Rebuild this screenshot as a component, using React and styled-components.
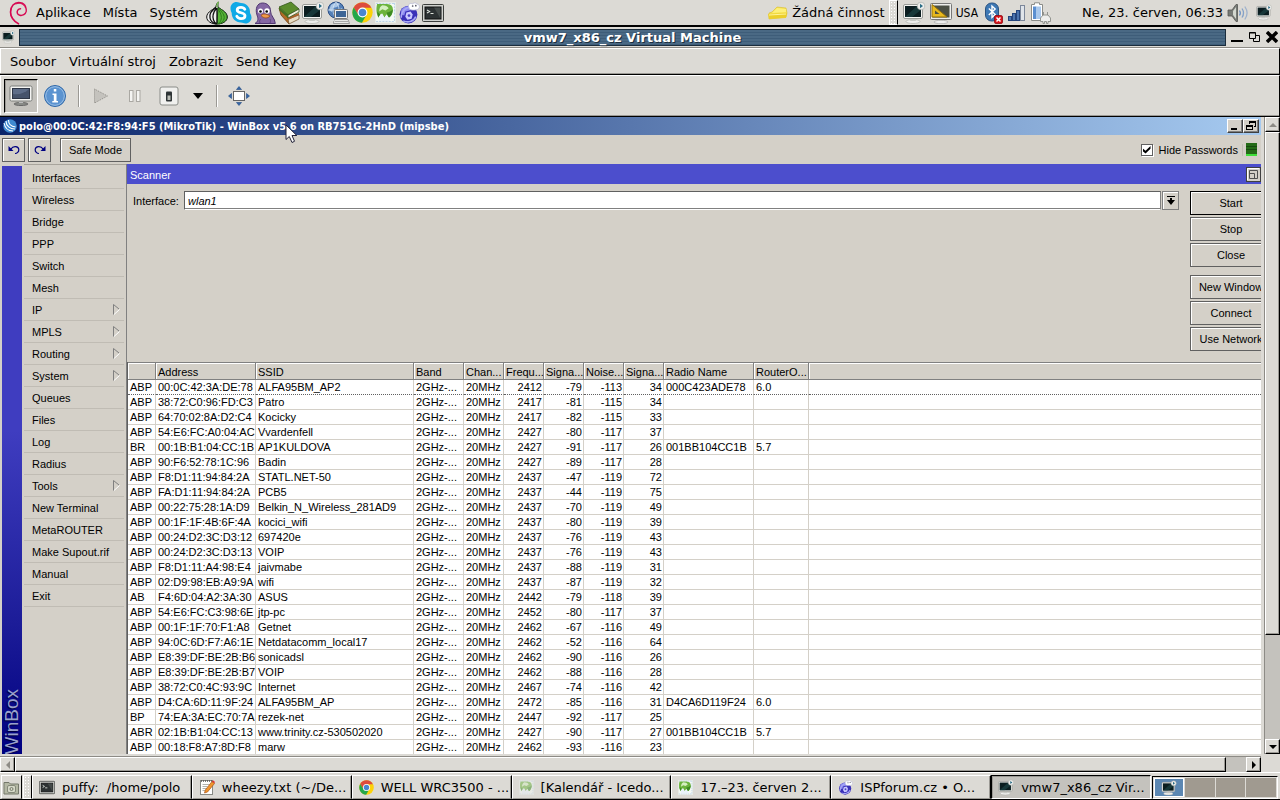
import styled, { createGlobalStyle } from "styled-components";

const GlobalStyle = createGlobalStyle`
  * {
    box-sizing: border-box;
  }
  body {
    margin: 0;
    background: #dcdad5;
    font-family: "DejaVu Sans", sans-serif;
    font-size: 13px;
    color: #000;
    overflow: hidden;
  }
  button,
  input {
    font: inherit;
    color: inherit;
    margin: 0;
    padding: 0;
  }
  button {
    background: none;
    border: none;
    white-space: pre;
  }
  svg {
    display: block;
    flex: none;
  }
`;

const Desktop = styled.div`
  height: 100vh;
  display: flex;
  flex-direction: column;
  position: relative;
`;

/* ---------- top panel ---------- */

const Panel = styled.header`
  height: 27px;
  flex: none;
  display: flex;
  align-items: center;
  padding: 0 8px 0 8px;
  border-bottom: 2px solid #000;
  border-image: linear-gradient(#8d8b86 50%, #000 50%) 2;
`;

const PanelMenu = styled.nav`
  display: flex;
  align-items: center;
  gap: 12px;
  margin: 0 8px 0 6px;
`;

const PanelButton = styled.button`
  line-height: 18px;
`;

const Launchers = styled.div`
  display: flex;
  align-items: center;
  gap: 2px;
`;

const Tray = styled.div`
  display: flex;
  align-items: center;
  gap: ${(props) => props.$gap || 4}px;
  margin-left: ${(props) => (props.$push ? "auto" : "0")};
`;

const Layout = styled.span`
  font-family: "DejaVu Sans Condensed", "DejaVu Sans", sans-serif;
  font-size: 12px;
  margin-right: 2px;
`;

const Clock = styled.time`
  margin: 0 4px 0 30px;
  white-space: nowrap;
`;

const Handle = styled.div`
  width: 9px;
  height: ${(props) => props.$height}px;
  flex: none;
  border: 1px solid #fff;
  border-right-color: #000;
  background-color: #dcdad5;
  background-image: radial-gradient(#fff 1px, transparent 1px);
  background-size: 3px 3px;
`;

/* ---------- host window ---------- */

const HostTitle = styled.div`
  height: 21px;
  flex: none;
  display: flex;
  align-items: center;
  padding: 0 2px 0 2px;
  border-bottom: 1px solid #8d8b86;
`;

const HostCaption = styled.h1`
  flex: 1;
  margin: 0 5px 0 4px;
  padding-left: 20px;
  height: 17px;
  line-height: 15px;
  font-size: 13px;
  text-align: center;
  color: #fff;
  text-shadow: 1px 1px 0 #1d2f40;
  border: 1px solid #1b2d3d;
  background: repeating-linear-gradient(#4a6984 0 2px, #3e5d79 2px 3px);
`;

const WindowControls = styled.div`
  display: flex;
  gap: 6px;
`;

const MenuBar = styled.nav`
  height: 27px;
  flex: none;
  display: flex;
  align-items: center;
  gap: 13px;
  padding: 0 10px;
  border-top: 1px solid #fff;
  border-right: 1px solid #000;
  border-bottom: 1px solid #000;
  box-shadow: inset 0 -1px 0 #9b9994, inset 1px 0 0 #fff;
`;

const ToolBar = styled.div`
  height: 42px;
  flex: none;
  display: flex;
  align-items: center;
  padding-left: 4px;
  border-top: 1px solid #fff;
  border-right: 1px solid #000;
  border-bottom: 1px solid #000;
  box-shadow: inset 0 -1px 0 #9b9994, inset 1px 0 0 #fff;
`;

const ToolButton = styled.button`
  width: ${(props) => props.$width || 34}px;
  height: 34px;
  display: flex;
  align-items: center;
  justify-content: center;
  ${(props) =>
    props.$pressed &&
    `
    background: #c4c2bd;
    border: 1px solid;
    border-color: #000 #fff #fff #000;
    box-shadow: inset 1px 1px 0 #9b9994;
  `}
`;

const ToolSeparator = styled.div`
  width: 2px;
  height: 22px;
  margin: 0 ${(props) => props.$right || 4}px 0 6px;
  background: #9b9994;
  border-right: 1px solid #fff;
`;

const Viewer = styled.main`
  flex: 1;
  min-height: 0;
  display: grid;
  grid-template-columns: 1fr 16px;
  grid-template-rows: 1fr 16px;
  column-gap: 3px;
  row-gap: 2px;
`;

/* ---------- scroll bars ---------- */

const ScrollBar = styled.div`
  display: flex;
  flex-direction: ${(props) => (props.$vertical ? "column" : "row")};
  background: #c4c2bd;
  border: 0 solid #8d8b86;
  border-width: ${(props) => (props.$vertical ? "0 0 0 1px" : "1px 0 0 0")};
`;

const ScrollArrow = styled.button`
  width: 15px;
  height: 15px;
  flex: none;
  display: flex;
  align-items: center;
  justify-content: center;
  background: #dcdad5;
  border: 1px solid;
  border-color: #fff #000 #000 #fff;
  box-shadow: inset -1px -1px 0 #9b9994;
`;

const ScrollThumb = styled.div`
  flex: ${(props) => props.$size};
  background: #dcdad5;
  border: 1px solid;
  border-color: #fff #000 #000 #fff;
  box-shadow: inset -1px -1px 0 #9b9994;
`;

const ScrollTrough = styled.div`
  flex: ${(props) => props.$size};
`;

/* ---------- winbox ---------- */

const Guest = styled.section`
  min-width: 0;
  min-height: 0;
  overflow: hidden;
  display: flex;
  flex-direction: column;
  background: #d4d0c8;
  font-family: "Liberation Sans", Arial, sans-serif;
  font-size: 11px;
`;

const WinTitle = styled.div`
  height: 18px;
  flex: none;
  display: flex;
  align-items: center;
  gap: 2px;
  padding: 0 2px 0 3px;
  background: linear-gradient(90deg, #0a246a, #a6caf0);
`;

const WinCaption = styled.h2`
  flex: 1;
  margin: 0;
  font-family: "DejaVu Sans Condensed", "DejaVu Sans", sans-serif;
  font-size: 11px;
  color: #fff;
`;

const CaptionButton = styled.button`
  width: 16px;
  height: 14px;
  margin-left: ${(props) => (props.$joined ? "-2px" : "0")};
  display: flex;
  align-items: center;
  justify-content: center;
  background: #d4d0c8;
  border: 1px solid;
  border-color: #fff #404040 #404040 #fff;
  box-shadow: inset -1px -1px 0 #808080;
`;

const WinTools = styled.div`
  height: 29px;
  flex: none;
  display: flex;
  align-items: center;
  gap: 3px;
  padding: 0 4px 0 2px;
`;

const WinButton = styled.button`
  width: ${(props) => props.$width}px;
  height: 24px;
  flex: none;
  display: flex;
  align-items: center;
  justify-content: center;
  margin-right: ${(props) => props.$after || 0}px;
  background: #d4d0c8;
  border: 1px solid ${(props) => (props.$focused ? "#000" : "#606060")};
  box-shadow: inset 1px 1px 0 #fff;
`;

const HidePasswords = styled.label`
  margin-left: auto;
  display: flex;
  align-items: center;
  gap: 6px;
  padding-right: 4px;
  border-right: 1px solid #c0bcb4;
`;

const Tick = styled.input`
  appearance: none;
  width: 12px;
  height: 12px;
  background: #fff;
  border: 1px solid #606060;
  box-shadow: 1px 1px 0 #fff;
  display: flex;
  align-items: center;
  justify-content: center;

  &:checked::before {
    content: "";
    width: 8px;
    height: 8px;
    background: #000;
    clip-path: polygon(0 35%, 38% 65%, 100% 5%, 100% 40%, 38% 100%, 0 70%);
  }
`;

const WinBody = styled.div`
  flex: 1;
  min-height: 0;
  display: flex;
`;

const Brand = styled.div`
  width: 20px;
  flex: none;
  margin: 2px 2px 0 2px;
  background: linear-gradient(#3f3dc0 0 45%, #1c1c98 78%, #000080);
  display: flex;
  align-items: flex-end;
  justify-content: center;
  overflow: hidden;

  span {
    writing-mode: vertical-rl;
    transform: rotate(180deg);
    font-size: 19px;
    line-height: 20px;
    color: #9aa1cc;
    text-shadow: -1px -1px 1px #00003c;
  }
`;

const SideMenu = styled.nav`
  width: 102px;
  flex: none;
  padding: 2px 2px 0 0;
  border-top: 1px solid #a8a49c;
`;

const SideItem = styled.button`
  width: 100%;
  height: 22px;
  display: flex;
  align-items: center;
  justify-content: space-between;
  padding: 0 4px 0 8px;
  border-bottom: 1px solid #c0bcb4;
`;

const Scanner = styled.section`
  flex: 1;
  min-width: 0;
  display: flex;
  flex-direction: column;
  border-left: 1px solid #808080;
`;

const ScannerTitle = styled.div`
  height: 20px;
  flex: none;
  display: flex;
  align-items: center;
  justify-content: space-between;
  padding-left: 3px;
  color: #fff;
  background: #4c4ecd;

  h3 {
    margin: 0;
    padding-top: 2px;
    font-size: 11px;
    font-weight: normal;
  }
`;

const ScannerForm = styled.div`
  flex: none;
  display: flex;
  align-items: flex-start;
  gap: 11px;
  padding: 7px 0 11px 6px;
`;

const Field = styled.div`
  flex: 1;
  display: flex;
  align-items: center;
  gap: 1px;

  label {
    width: 50px;
  }
`;

const FieldInput = styled.input`
  flex: 1;
  min-width: 0;
  height: 19px;
  padding: 0 3px;
  border: 1px solid;
  border-color: #606060 #808080 #fff #606060;
  box-shadow: inset 0 -1px 0 #808080;
  background: #fff;
  font-style: italic;
`;

const DropButton = styled.button`
  width: 17px;
  height: 19px;
  display: flex;
  align-items: center;
  justify-content: center;
  border: 1px solid #808080;
  box-shadow: inset 1px 1px 0 #fff;
`;

const Actions = styled.div`
  width: 71px;
  overflow: hidden;
  display: flex;
  flex-direction: column;
  gap: 8px;

  > div {
    display: flex;
    flex-direction: column;
    gap: 2px;
  }
`;

const TableBox = styled.div`
  flex: 1;
  min-height: 0;
  overflow: hidden;
  background: #fff;
  border-left: 1px solid #606060;
`;

const Table = styled.table`
  width: 100%;
  table-layout: fixed;
  border-collapse: separate;
  border-spacing: 0;
  white-space: nowrap;
`;

const Th = styled.th`
  height: 18px;
  padding: 1px 0 0 2px;
  text-align: left;
  font-weight: normal;
  line-height: 14px;
  overflow: hidden;
  background: #d4d0c8;
  border: solid #808080;
  border-width: 1px 1px 1px 0;
  box-shadow: inset 1px 1px 0 #fff;

  &:last-child {
    border-right: none;
  }
`;

const Td = styled.td`
  height: 15px;
  padding: 0 1px 0 2px;
  line-height: 14px;
  overflow: hidden;
  text-align: ${(props) => (props.$number ? "right" : "left")};
  border-right: 1px solid #d4d0c8;
  border-bottom: 1px ${(props) => (props.$current ? "dotted #606060" : "solid #d4d0c8")};

  &:last-child {
    border-right: none;
  }
`;

/* ---------- bottom panel ---------- */

const TaskBar = styled.footer`
  height: 28px;
  flex: none;
  display: flex;
  align-items: flex-end;
  padding: 0 2px 0 1px;
  border-top: 1px solid #fff;
  border-bottom: 1px solid #000;
`;

const DesktopButton = styled.button`
  width: 21px;
  height: 24px;
  display: flex;
  align-items: center;
  justify-content: center;
  margin-right: 1px;
  border: 1px solid;
  border-color: #fff #000 #9b9994 #fff;
`;

const Tasks = styled.div`
  flex: 1;
  min-width: 0;
  display: flex;
  margin-right: 1px;
`;

const Task = styled.button`
  flex: 1;
  min-width: 0;
  height: 24px;
  display: flex;
  align-items: center;
  gap: 7px;
  padding-left: 6px;
  overflow: hidden;
  border: 1px solid;
  border-color: ${(props) =>
    props.$active ? "#000 #fff #fff #000" : "#fff #000 #9b9994 #fff"};
  background: ${(props) => (props.$active ? "#c4c2bd" : "#dcdad5")};
  box-shadow: ${(props) =>
    props.$active ? "inset 1px 1px 0 #9b9994" : "inset -1px 0 0 #9b9994"};

  svg {
    opacity: ${(props) => (props.$minimized ? 0.5 : 1)};
  }
`;

const Pager = styled.div`
  width: 126px;
  height: 23px;
  flex: none;
  display: flex;
  gap: 1px;
  padding: 1px;
  background: #dcdad5;
  border: 1px solid;
  border-color: #000 #fff #fff #000;
`;

const Workspace = styled.button`
  flex: 1;
  display: flex;
  align-items: center;
  justify-content: center;
  background: ${(props) => (props.$active ? "#5c87b2" : "#a09a90")};
  border: 1px solid ${(props) => (props.$active ? "#fff" : "#a09a90")};
`;

const Pointer = styled.div`
  position: absolute;
  left: 285px;
  top: 124px;
`;

/* ---------- icons ---------- */

const DebianIcon = () => (
  <svg width="22" height="24" viewBox="0 0 22 24" fill="none" stroke="#d70751" strokeLinecap="round">
    <path strokeWidth="1.6" d="M17.500 6C16.500 1.500 9 0 5 4 1.500 8 2 14 4.500 17.500 6.200 20 7.800 21.500 10.500 22.800" />
    <path strokeWidth="1.500" d="M17.500 6c1.500 3 .8 6.300-1.700 7.700-2.600 1.400-5.800.7-6.500-1.600-.6-2.300.8-4.300 3.200-4.400" />
    <path strokeWidth=".8" d="M3.500 7C2 10 2.500 14 4 16.500M8 3C11 1.500 14.500 2.500 16.500 5" />
  </svg>
);

const TorIcon = () => (
  <svg width="22" height="24" viewBox="0 0 22 24">
    <path fill="#eee" stroke="#111" d="M12.500 1c-.8 2-.6 3.500-.5 5 1.500 2 9.300 4.500 9.300 10 0 4.500-5 7-10.300 7S.7 20.500.7 16C.7 10.500 8.500 8 10 6c0-2 1-4 2.500-5z" />
    <path fill="#56b436" stroke="#184d10" strokeWidth=".8" d="M12 6c1.500 2 9 4.500 9 10 0 4.300-4.500 6.800-10 6.800z" />
    <path fill="none" stroke="#111" strokeWidth="1.300" d="M10 6c-4 4-7 6-6 11 .5 3 3 5 6 6M10.500 7c-3 4-4.500 8-3 12 .6 2 2 3.500 3.500 4M11 7v16" />
    <path fill="none" stroke="#2f7a1c" strokeWidth="1" d="M12 7c4 4 7 7 6 11-.5 2-2.500 4-5 5M12 8c3 4 4 8 3 11-.5 2-2 3.500-4 4" />
    <path fill="none" stroke="#7bc35a" strokeWidth="1.500" d="M11 6c-.4-2 .2-3.500 1.500-5" />
  </svg>
);

const SkypeIcon = () => (
  <svg width="22" height="24" viewBox="0 0 22 24">
    <path fill="#10a9e6" d="M6.500 1C9 1 9 2 11 2c5.500 0 9.500 4.500 9 10 1 1.500 1.500 3 1.500 4.500 0 3.300-2.700 6-6 6-2 0-2.500-1-4.500-1-5.500 0-9.500-4.500-9.300-9.500C1 10.500.5 9 .5 7c0-3.300 2.700-6 6-6z" />
    <path fill="none" stroke="#fff" strokeWidth="2.800" strokeLinecap="round" d="M14.800 8.300C14 6.800 12.700 6.300 11 6.300c-2.300 0-3.800 1-3.800 2.600 0 3.800 7.800 1.900 7.800 5.800 0 1.800-1.800 2.900-4 2.900-2 0-3.500-.7-4.200-2.300" />
  </svg>
);

const PidginIcon = () => (
  <svg width="22" height="24" viewBox="0 0 22 24">
    <path fill="#8467a3" stroke="#4f3670" d="M1 22.500C5 20 4 17 3 14 1 8 3 2 8.500 2c5 0 8 3.500 8 8 0 5 4.500 7 4.800 12.500z" />
    <circle cx="6.500" cy="10" r="2.500" fill="#fff" />
    <circle cx="13" cy="10" r="2.700" fill="#fff" />
    <circle cx="6.500" cy="10.500" r="1.300" />
    <circle cx="12.700" cy="10.500" r="1.300" />
    <path fill="#f09a4a" stroke="#9b4b1c" strokeWidth=".8" d="M7 14.500c2-2 5-2 9 .5-2 2.500-6 3-9-.5z" />
    <path fill="none" stroke="#5f457f" d="M6 22c-1-2 0-3 1-4M16 22c1-2 .5-3 0-4" />
  </svg>
);

const BooksIcon = () => (
  <svg width="22" height="24" viewBox="0 0 22 24">
    <path fill="#b26b25" stroke="#6f3d10" strokeWidth=".8" d="M1 7l9 9 1 7L3 14z" />
    <path fill="#e7dcc4" stroke="#7a5a35" strokeWidth=".8" d="M10 18l11-4v4l-10 5z" />
    <path fill="#a9602a" d="M10 16l11-4v2l-11 5z" />
    <path fill="#5b8c2c" stroke="#33561a" strokeWidth=".8" d="M1 6l12-5 8 7-11 6z" />
    <path fill="#f3f0df" stroke="#33561a" strokeWidth=".8" d="M10 14l11-6v3l-11 6z" />
    <path fill="#476f22" d="M1 6l9 8v3L1 9z" />
  </svg>
);

const VmIcon = ({ width = 22, height = 24 }) => (
  <svg width={width} height={height} viewBox="0 0 22 24">
    <ellipse cx="10" cy="20.500" rx="7" ry="2" fill="#eeeeec" stroke="#a5a7a3" strokeWidth=".6" />
    <path fill="#c6c8c4" d="M8 17h4l1 3H7z" />
    <rect x=".5" y="3.500" width="19" height="14" rx="1.500" fill="#f4f4f2" stroke="#9a9c98" />
    <rect x="2" y="5" width="16" height="11" fill="#0b1d20" />
    <path fill="#245251" d="M2 16L14 5h4v4l-9 7z" opacity=".5" />
    <circle cx="18" cy="5" r="3.800" fill="#eeeeec" stroke="#a5a7a3" strokeWidth=".6" />
    <path fill="#2b6c85" d="M17 2.800l3 2.200-3 2.200z" />
  </svg>
);

const NetworkIcon = () => (
  <svg width="24" height="24" viewBox="0 0 24 24">
    <circle cx="10" cy="9" r="8" fill="#5480b8" stroke="#2c4f86" />
    <path fill="#a9c6e6" d="M5 4c2-2 7-3 9-1l-3 3-4 1-1 4-3-2zM12 9l4-2 1 3-3 3z" />
    <path fill="none" stroke="#dce9f6" strokeWidth=".7" d="M2 9h16M10 1c-4 4-4 12 0 16M10 1c4 4 4 12 0 16" />
    <rect x="8.500" y="8.500" width="13" height="9" rx="1" fill="#eee" stroke="#777" />
    <rect x="10" y="10" width="10" height="6" fill="#3d6596" />
    <path fill="#e8e8e6" stroke="#888" strokeWidth=".8" d="M8 18.500h14l1.500 4h-16z" />
    <path stroke="#999" strokeWidth=".8" d="M9 20.500h13" />
    <path fill="none" stroke="#ddd" strokeWidth="2" d="M3 19h5" />
  </svg>
);

const ChromeIcon = ({ size = 21 }) => (
  <svg width={size} height={size} viewBox="0 0 20 20">
    <circle cx="10" cy="10" r="9.700" fill="#fcd209" />
    <path fill="#dd4b3e" d="M1.600 5.200A9.700 9.700 0 0 1 18.500 5.500H10a4.500 4.500 0 0 0-4.200 3z" />
    <path fill="#dd4b3e" d="M1.600 5.200L6 12.300 10 5.500z" />
    <path fill="#25a74b" d="M1.600 5.200A9.700 9.700 0 0 0 9.500 19.700l4-7.200L6.200 12.500z" />
    <circle cx="10" cy="10" r="4.700" fill="#fff" />
    <circle cx="10" cy="10" r="3.600" fill="#4a86d0" />
  </svg>
);

const MailIcon = ({ size = 21 }) => (
  <svg width={size} height={size} viewBox="0 0 20 20">
    <rect x=".5" y=".5" width="19" height="19" fill="#f5faf5" stroke="#e8ece6" />
    <path stroke="#bcd2e8" strokeDasharray="2 1" d="M1 1.500h18M1 18.500h18M18.500 1v18" />
    <path fill="#6bb33c" d="M2 2h8c4 0 7 1 7 5 0 3-1 7-4 8l-2-3-2 3-3-4-3 3c-2-3-2-8-1-12z" />
    <path fill="#d5efc0" d="M7 3c3 0 5 1 6 3l-3 2-3-1-3 2c0-3 1-5 3-6z" />
    <path fill="#3d8a23" d="M11 10c3 0 4-1 6-3 0 4-2 7-4 8zM2 9l3 3-2 3z" />
    <path fill="#e9f2fa" d="M4 14l3-3 2 4 2-3 3 4v2H4z" />
  </svg>
);

const IceIcon = ({ size = 22 }) => (
  <svg width={size} height={size} viewBox="0 0 21 21">
    <circle cx="10" cy="12" r="8.500" fill="#3a31b8" />
    <path fill="#8d8cf0" d="M3 8c2-4 7-5 11-3l-3 3-4 1-1 4-3-1z" />
    <path fill="none" stroke="#a9a9f6" strokeWidth="1.500" d="M3 15c0-6 4-10 9-10M5 18c4 2 10 1 12-4" />
    <path fill="#c9c9ff" d="M8 10l4-1 2 3-1 4-4 1-2-3z" />
    <circle cx="10.500" cy="13" r="1.300" fill="#4a41c4" />
    <path fill="#fff" stroke="#b9bbd8" strokeWidth=".7" d="M10 4c0-3 3-3 4-2 1-2 4-1 4 0 3 0 3 4 1 5-2 1-7 1-8 0z" />
    <circle cx="14" cy="3.800" r=".8" fill="#556" />
    <circle cx="17" cy="3.500" r=".8" fill="#556" />
  </svg>
);

const TerminalIcon = ({ width = 22, height = 20 }) => (
  <svg width={width} height={height} viewBox="0 0 22 20">
    <rect x=".5" y="1.500" width="21" height="17" rx="1" fill="#d0d2ce" stroke="#3c3e3b" />
    <rect x="3" y="4" width="16" height="12" fill="#2d3233" stroke="#111" />
    <path fill="none" stroke="#dfe3dc" strokeWidth="1.200" d="M5 7l2.500 1.500L5 10M8.500 10.500h3" />
    <path fill="#555b5a" opacity=".6" d="M12 4.500h6.500v11z" />
  </svg>
);

const NoteIcon = () => (
  <svg width="20" height="16" viewBox="0 0 20 16">
    <path fill="#f6e04e" stroke="#d9bd2b" strokeWidth=".6" d="M1 8l3-1 5-5 9 1 1 5-1 4-17 2z" />
    <path fill="#fdf07a" d="M4 8l5-5 9 1v3z" />
    <path fill="#eccf2c" d="M0 9l19-1-1 5L1 14z" />
    <path stroke="#fff59a" strokeWidth="1.200" d="M1 10l17-1" />
  </svg>
);

const RulerIcon = () => (
  <svg width="22" height="22" viewBox="0 0 22 22">
    <ellipse cx="11" cy="20" rx="7" ry="1.700" fill="#eee" stroke="#999" strokeWidth=".6" />
    <rect x=".5" y="1.500" width="21" height="16" rx="1" fill="#eeeeec" stroke="#777" />
    <rect x="2.500" y="3.500" width="17" height="12" fill="#4b4f45" />
    <path fill="#e8b91e" stroke="#94700b" d="M2 2.500L17 15H2z" />
    <path fill="#4b4f45" d="M5 8.500l4.500 3.500H5z" />
  </svg>
);

const BluetoothIcon = () => (
  <svg width="20" height="22" viewBox="0 0 20 22">
    <rect x="1.500" y="1" width="13" height="18" rx="6" fill="#3e78b4" stroke="#2a5280" />
    <path fill="none" stroke="#fff" strokeWidth="1.400" d="M4.800 6.500l6.400 6-3.200 3V4l3.200 3-6.400 6" />
    <rect x="10.500" y="13.500" width="8" height="8" rx="1.500" fill="#d8141c" stroke="#8f0a10" strokeWidth=".8" />
    <path stroke="#fff" strokeWidth="1.500" d="M12.500 15.500l4 4m0-4l-4 4" />
  </svg>
);

const SignalIcon = () => (
  <svg width="18" height="18" viewBox="0 0 18 18" fill="#4c74ae" stroke="#24447c">
    <rect x=".5" y="12.500" width="3" height="4" />
    <rect x="4.500" y="9.500" width="3" height="7" />
    <rect x="8.500" y="6.500" width="3" height="10" />
    <rect x="12.500" y="1.500" width="4" height="15" fill="#dfe4ea" stroke="#7c879a" />
  </svg>
);

const BatteryIcon = () => (
  <svg width="22" height="22" viewBox="0 0 22 22">
    <path fill="#fff" stroke="#8a8c88" d="M4.500 2.500V.8h5v1.700h3v16h-11v-16z" />
    <path fill="#5b8fd0" d="M3 4.500h3.500v12.500H3z" />
    <path fill="#a9c8ec" d="M6.500 4.500h4.500v12.500H6.500z" />
    <path fill="#eeeeec" stroke="#8a8c88" strokeWidth=".9" d="M10.500 19.500v-3.500l2.500-3h5l2.500 3v3.500h-2.500v2h-1.500v-2h-2v2H13v-2zM13.500 13v-3M17.500 13v-3" />
  </svg>
);

const SpeakerIcon = () => (
  <svg width="23" height="20" viewBox="0 0 23 20">
    <path fill="#777a76" stroke="#555753" strokeWidth=".8" d="M1 7h4l4-5.500h1.500v17H9L5 13H1z" />
    <path fill="#d3d7cf" d="M6 8l3-4v12l-3-4z" />
    <g fill="none" stroke="#6d92c4" strokeWidth="1.300">
      <path d="M12.500 7.500c1 1.500 1 3.500 0 5" />
      <path d="M15 5.500c2 3 2 6 0 9" opacity=".8" />
      <path d="M17.800 3.500c2.800 4 2.800 9 0 13" opacity=".55" />
    </g>
  </svg>
);

const MinimizeIcon = () => (
  <svg width="12" height="12" viewBox="0 0 12 12">
    <path strokeWidth="2" stroke="#000" d="M0 10h12" />
  </svg>
);

const RestoreIcon = () => (
  <svg width="11" height="12" viewBox="0 0 11 12" fill="none" stroke="#000">
    <path d="M.5 2h6M.5 1.500v6h6v-6z" />
    <path d="M7 4.500h3.500v6h-6V8" />
  </svg>
);

const CloseIcon = () => (
  <svg width="12" height="12" viewBox="0 0 12 12">
    <path stroke="#000" strokeWidth="3.400" d="M1 1l10 10M11 1L1 11" />
  </svg>
);

const ConsoleIcon = () => (
  <svg width="24" height="22" viewBox="0 0 24 22">
    <ellipse cx="12" cy="19" rx="7" ry="1.500" fill="#8b8d89" stroke="#666" />
    <path fill="#bbb" d="M10 16h4v2h-4z" />
    <rect x="1" y="1" width="22" height="15" rx="1.500" fill="#f4f4f2" stroke="#7b7d79" />
    <rect x="3.500" y="3.500" width="17" height="10" fill="#46536b" stroke="#2e3646" />
    <path fill="#5e6d88" d="M4 9c6 1 12-1 16-5H4z" />
  </svg>
);

const InfoIcon = () => (
  <svg width="24" height="24" viewBox="0 0 24 24">
    <circle cx="12" cy="12" r="10.500" fill="#5b93d0" stroke="#2f68a8" />
    <circle cx="12" cy="12" r="9.300" fill="none" stroke="#9cc0e6" />
    <path fill="#fff" d="M10.800 5h2.500v2.500h-2.500zM9.500 9.500h4V17H15v1.500H9.300V17h1.500v-6H9.500z" />
  </svg>
);

const PlayIcon = () => (
  <svg width="16" height="16" viewBox="0 0 16 16">
    <path fill="#c4c2bd" stroke="#8d8b86" strokeDasharray="1 1" d="M1.500 1L14.500 8l-13 7z" />
  </svg>
);

const PauseIcon = () => (
  <svg width="14" height="14" viewBox="0 0 14 14" fill="#f4f4f2" stroke="#aaa8a3">
    <rect x="1.500" y="1.500" width="3.500" height="11" />
    <rect x="8.500" y="1.500" width="3.500" height="11" />
  </svg>
);

const PowerIcon = () => (
  <svg width="20" height="20" viewBox="0 0 20 20">
    <rect x="1" y="1" width="18" height="18" rx="2" fill="#f0f0ee" stroke="#8a8c88" />
    <rect x="7" y="5.500" width="6" height="10" rx="1" fill="#2e3436" />
    <rect x="8.500" y="9.500" width="3" height="4.500" fill="#babdb6" />
  </svg>
);

const FullscreenIcon = () => (
  <svg width="22" height="20" viewBox="0 0 22 20">
    <rect x="5.500" y="5.500" width="11" height="9" fill="#fff" stroke="#666" />
    <path fill="#3465a4" stroke="#204a87" strokeWidth=".6" d="M11 .5L13.500 3.500h-5zM11 19.500L8.500 16.500h5zM.5 10L3.500 7.500v5zM21.500 10L18.500 12.500v-5z" />
  </svg>
);

const Arrow = ({ d, color = "#000", width = 10, height = 10 }) => (
  <svg width={width} height={height} viewBox="0 0 10 10">
    <path fill={color} d={d} />
  </svg>
);

const MikrotikIcon = () => (
  <svg width="14" height="14" viewBox="0 0 14 14">
    <circle cx="7" cy="7" r="6.800" fill="#3f8ad0" />
    <path fill="none" stroke="#fff" strokeWidth="1.100" d="M1 4c1 5 4 8 9 8M3 2c0 5 4 8 9 8M5.500 1c0 4 3 6.500 7 7" />
  </svg>
);

const UndoIcon = ({ flipped }) => (
  <svg width="12" height="10" viewBox="0 0 12 10">
    <g transform={flipped ? "matrix(-1 0 0 1 12 0)" : undefined}>
      <path fill="#000080" d="M.5 1v5h5z" />
      <path fill="none" stroke="#000080" strokeWidth="1.200" d="M3 4c2-3.500 7.500-3 7.800.5C11 7 9 8.500 7 8.500" />
    </g>
  </svg>
);

const SubmenuIcon = () => (
  <svg width="7" height="11" viewBox="0 0 7 11" fill="none">
    <path stroke="#fff" d="M1 10.500L6.500 5.500" />
    <path stroke="#808080" d="M6 5L.5.500v10" />
  </svg>
);

const TrafficIcon = () => (
  <svg width="11" height="13" viewBox="0 0 11 13">
    <rect width="11" height="11" fill="#246b18" />
    <path stroke="#174a10" d="M0 3.500h11M0 6.500h11" />
    <rect y="11" width="11" height="2" fill="#3fe03a" />
  </svg>
);

const MaximizePanelIcon = () => (
  <svg width="15" height="15" viewBox="0 0 15 15" fill="none">
    <rect x=".5" y=".5" width="14" height="14" fill="#d4d0c8" stroke="#404040" />
    <path stroke="#fff" d="M1.500 13V1.500H13" />
    <path stroke="#505050" d="M3.500 3.500h8v8h-8zM3.500 6.500h5v5" />
  </svg>
);

const FilesIcon = () => (
  <svg width="17" height="17" viewBox="0 0 17 17">
    <path fill="#b4b8a4" stroke="#74786a" d="M1 3.500h5l1.500 1.500H15.500v10H1z" />
    <rect x="4.500" y="6.500" width="8" height="7" rx="1.500" fill="#d6d9c8" stroke="#85897a" />
    <circle cx="8.500" cy="10" r="1.500" fill="none" stroke="#74786a" />
  </svg>
);

const EditorIcon = () => (
  <svg width="16" height="16" viewBox="0 0 16 16">
    <rect x="1.500" y="1.500" width="12" height="14" fill="#fff" stroke="#888a85" />
    <path stroke="#555" strokeWidth="1.500" strokeDasharray="1 1" d="M2 2h11" />
    <path stroke="#b0b2ae" d="M3.500 5.500h7M3.500 7.500h5M3.500 9.500h4M3.500 11.500h3" />
    <path fill="#f0952d" stroke="#a8551a" strokeWidth=".7" d="M13 2.500l2.500 2-7 8.500-3 1 .8-3z" />
    <path fill="#d33" d="M13 2.500l1-1.200 2 1.700-.8 1.300z" />
  </svg>
);

const PointerIcon = () => (
  <svg width="13" height="20" viewBox="0 0 13 20">
    <path fill="#fff" stroke="#222238" d="M1 1v14.500l3.300-3 2.700 6 2.500-1.200L7 11.500h4.800z" />
  </svg>
);

/* ---------- data ---------- */

const sideMenu = [
  { label: "Interfaces" },
  { label: "Wireless" },
  { label: "Bridge" },
  { label: "PPP" },
  { label: "Switch" },
  { label: "Mesh" },
  { label: "IP", submenu: true },
  { label: "MPLS", submenu: true },
  { label: "Routing", submenu: true },
  { label: "System", submenu: true },
  { label: "Queues" },
  { label: "Files" },
  { label: "Log" },
  { label: "Radius" },
  { label: "Tools", submenu: true },
  { label: "New Terminal" },
  { label: "MetaROUTER" },
  { label: "Make Supout.rif" },
  { label: "Manual" },
  { label: "Exit" },
];

const columns = [
  { title: "", width: 28 },
  { title: "Address", width: 100 },
  { title: "SSID", width: 158 },
  { title: "Band", width: 50 },
  { title: "Chan...", width: 40 },
  { title: "Frequ...", width: 40, number: true },
  { title: "Signa...", width: 40, number: true },
  { title: "Noise...", width: 40, number: true },
  { title: "Signa...", width: 40, number: true },
  { title: "Radio Name", width: 90 },
  { title: "RouterO...", width: 55 },
  { title: "" },
];

// flags, address, ssid, frequency, signal, noise, signal to noise, radio name, version
const networks = [
  ["ABP", "00:0C:42:3A:DE:78", "ALFA95BM_AP2", 2412, -79, -113, 34, "000C423ADE78", "6.0"],
  ["ABP", "38:72:C0:96:FD:C3", "Patro", 2417, -81, -115, 34],
  ["ABP", "64:70:02:8A:D2:C4", "Kocicky", 2417, -82, -115, 33],
  ["ABP", "54:E6:FC:A0:04:AC", "Vvardenfell", 2427, -80, -117, 37],
  ["BR", "00:1B:B1:04:CC:1B", "AP1KULDOVA", 2427, -91, -117, 26, "001BB104CC1B", "5.7"],
  ["ABP", "90:F6:52:78:1C:96", "Badin", 2427, -89, -117, 28],
  ["ABP", "F8:D1:11:94:84:2A", "STATL.NET-50", 2437, -47, -119, 72],
  ["ABP", "FA:D1:11:94:84:2A", "PCB5", 2437, -44, -119, 75],
  ["ABP", "00:22:75:28:1A:D9", "Belkin_N_Wireless_281AD9", 2437, -70, -119, 49],
  ["ABP", "00:1F:1F:4B:6F:4A", "kocici_wifi", 2437, -80, -119, 39],
  ["ABP", "00:24:D2:3C:D3:12", "697420e", 2437, -76, -119, 43],
  ["ABP", "00:24:D2:3C:D3:13", "VOIP", 2437, -76, -119, 43],
  ["ABP", "F8:D1:11:A4:98:E4", "jaivmabe", 2437, -88, -119, 31],
  ["ABP", "02:D9:98:EB:A9:9A", "wifi", 2437, -87, -119, 32],
  ["AB", "F4:6D:04:A2:3A:30", "ASUS", 2442, -79, -118, 39],
  ["ABP", "54:E6:FC:C3:98:6E", "jtp-pc", 2452, -80, -117, 37],
  ["ABP", "00:1F:1F:70:F1:A8", "Getnet", 2462, -67, -116, 49],
  ["ABP", "94:0C:6D:F7:A6:1E", "Netdatacomm_local17", 2462, -52, -116, 64],
  ["ABP", "E8:39:DF:BE:2B:B6", "sonicadsl", 2462, -90, -116, 26],
  ["ABP", "E8:39:DF:BE:2B:B7", "VOIP", 2462, -88, -116, 28],
  ["ABP", "38:72:C0:4C:93:9C", "Internet", 2467, -74, -116, 42],
  ["ABP", "D4:CA:6D:11:9F:24", "ALFA95BM_AP", 2472, -85, -116, 31, "D4CA6D119F24", "6.0"],
  ["BP", "74:EA:3A:EC:70:7A", "rezek-net", 2447, -92, -117, 25],
  ["ABR", "02:1B:B1:04:CC:13", "www.trinity.cz-530502020", 2427, -90, -117, 27, "001BB104CC1B", "5.7"],
  ["ABP", "00:18:F8:A7:8D:F8", "marw", 2462, -93, -116, 23],
];

const tasks = [
  { label: "puffy:  /home/polo", icon: <TerminalIcon width={16} height={15} /> },
  { label: "wheezy.txt (~/De...", icon: <EditorIcon /> },
  { label: "WELL WRC3500 - ...", icon: <ChromeIcon size={15} /> },
  { label: "[Kalendář - Icedo...", icon: <MailIcon size={15} />, minimized: true },
  { label: "17.–23. červen 2...", icon: <MailIcon size={15} /> },
  { label: "ISPforum.cz • O...", icon: <IceIcon size={15} /> },
  { label: "vmw7_x86_cz Vir...", icon: <VmIcon width={16} height={17} />, active: true },
];

function TopPanel() {
  return (
    <Panel>
      <DebianIcon />
      <PanelMenu>
        <PanelButton>Aplikace</PanelButton>
        <PanelButton>Místa</PanelButton>
        <PanelButton>Systém</PanelButton>
      </PanelMenu>
      <Launchers>
        <TorIcon />
        <SkypeIcon />
        <PidginIcon />
        <BooksIcon />
        <VmIcon />
        <NetworkIcon />
        <ChromeIcon />
        <MailIcon />
        <IceIcon />
        <TerminalIcon />
      </Launchers>
      <Tray $push>
        <NoteIcon />
        <span>Žádná činnost</span>
        <Handle $height={25} />
        <VmIcon width={24} />
        <RulerIcon />
        <Layout>USA</Layout>
        <BluetoothIcon />
        <SignalIcon />
        <BatteryIcon />
      </Tray>
      <Clock>Ne, 23. červen, 06:33</Clock>
      <Tray $gap={6}>
        <SpeakerIcon />
        <VmIcon width={16} height={17} />
      </Tray>
    </Panel>
  );
}

function HostWindow() {
  return (
    <>
      <HostTitle>
        <VmIcon width={13} height={14} />
        <HostCaption>vmw7_x86_cz Virtual Machine</HostCaption>
        <WindowControls>
          <button aria-label="Minimize">
            <MinimizeIcon />
          </button>
          <button aria-label="Restore">
            <RestoreIcon />
          </button>
          <button aria-label="Close">
            <CloseIcon />
          </button>
        </WindowControls>
      </HostTitle>
      <MenuBar>
        <button>Soubor</button>
        <button>Virtuální stroj</button>
        <button>Zobrazit</button>
        <button>Send Key</button>
      </MenuBar>
      <ToolBar>
        <ToolButton $pressed aria-label="Console">
          <ConsoleIcon />
        </ToolButton>
        <ToolButton aria-label="Details">
          <InfoIcon />
        </ToolButton>
        <ToolSeparator />
        <ToolButton aria-label="Play">
          <PlayIcon />
        </ToolButton>
        <ToolButton aria-label="Pause">
          <PauseIcon />
        </ToolButton>
        <ToolButton aria-label="Power">
          <PowerIcon />
        </ToolButton>
        <ToolButton $width={24} aria-label="Power options">
          <Arrow d="M0 2h10L5 8z" />
        </ToolButton>
        <ToolSeparator />
        <ToolButton aria-label="Full screen">
          <FullscreenIcon />
        </ToolButton>
      </ToolBar>
    </>
  );
}

function Scan() {
  return (
    <Scanner>
      <ScannerTitle>
        <h3>Scanner</h3>
        <button aria-label="Maximize panel">
          <MaximizePanelIcon />
        </button>
      </ScannerTitle>
      <ScannerForm>
        <Field>
          <label htmlFor="interface">Interface:</label>
          <FieldInput id="interface" defaultValue="wlan1" />
          <DropButton aria-label="Choose interface">
            <Arrow d="M1 0h8v1H1zM4 2h2v2h3L5 9 1 4h3z" />
          </DropButton>
        </Field>
        <Actions>
          <div>
            <WinButton $width={82} $focused>
              Start
            </WinButton>
            <WinButton $width={82}>Stop</WinButton>
            <WinButton $width={82}>Close</WinButton>
          </div>
          <div>
            <WinButton $width={82}>New Window</WinButton>
            <WinButton $width={82}>Connect</WinButton>
            <WinButton $width={82}>Use Network</WinButton>
          </div>
        </Actions>
      </ScannerForm>
      <TableBox>
        <Table>
          <colgroup>
            {columns.map((column, index) => (
              <col key={index} width={column.width} />
            ))}
          </colgroup>
          <thead>
            <tr>
              {columns.map((column, index) => (
                <Th key={index}>{column.title}</Th>
              ))}
            </tr>
          </thead>
          <tbody>
            {networks.map((network, row) => {
              const cells = [
                ...network.slice(0, 3),
                "2GHz-...",
                "20MHz",
                ...network.slice(3),
              ];
              return (
                <tr key={row}>
                  {columns.map((column, index) => (
                    <Td key={index} $number={column.number} $current={row === 0}>
                      {cells[index]}
                    </Td>
                  ))}
                </tr>
              );
            })}
          </tbody>
        </Table>
      </TableBox>
    </Scanner>
  );
}

function WinBox() {
  return (
    <Guest>
      <WinTitle>
        <MikrotikIcon />
        <WinCaption>
          polo@00:0C:42:F8:94:F5 (MikroTik) - WinBox v5.6 on RB751G-2HnD (mipsbe)
        </WinCaption>
        <CaptionButton aria-label="Minimize">
          <Arrow d="M1 7h6v2H1z" />
        </CaptionButton>
        <CaptionButton $joined aria-label="Restore">
          <Arrow d="M3 0h7v6H8V5h1V2H4v1H3zM0 4h7v5H0zM1 6v2h5V6z" />
        </CaptionButton>
      </WinTitle>
      <WinTools>
        <WinButton $width={23} aria-label="Undo">
          <UndoIcon />
        </WinButton>
        <WinButton $width={23} $after={6} aria-label="Redo">
          <UndoIcon flipped />
        </WinButton>
        <WinButton $width={71}>Safe Mode</WinButton>
        <HidePasswords>
          <Tick type="checkbox" defaultChecked />
          Hide Passwords
        </HidePasswords>
        <TrafficIcon />
      </WinTools>
      <WinBody>
        <Brand>
          <span>WinBox</span>
        </Brand>
        <SideMenu>
          {sideMenu.map((item) => (
            <SideItem key={item.label}>
              {item.label}
              {item.submenu && <SubmenuIcon />}
            </SideItem>
          ))}
        </SideMenu>
        <Scan />
      </WinBody>
    </Guest>
  );
}

function App() {
  return (
    <Desktop>
      <GlobalStyle />
      <TopPanel />
      <HostWindow />
      <Viewer>
        <WinBox />
        <ScrollBar $vertical>
          <ScrollArrow aria-label="Scroll up">
            <Arrow d="M1 7h8L5 3z" color="#8d8b86" />
          </ScrollArrow>
          <ScrollThumb $size={503} />
          <ScrollTrough $size={105} />
          <ScrollArrow aria-label="Scroll down">
            <Arrow d="M1 3h8L5 7z" />
          </ScrollArrow>
        </ScrollBar>
        <ScrollBar>
          <ScrollArrow aria-label="Scroll left">
            <Arrow d="M7 1v8L3 5z" color="#8d8b86" />
          </ScrollArrow>
          <ScrollThumb $size={1211} />
          <ScrollTrough $size={20} />
          <ScrollArrow aria-label="Scroll right">
            <Arrow d="M3 1v8l4-4z" />
          </ScrollArrow>
        </ScrollBar>
      </Viewer>
      <TaskBar>
        <DesktopButton aria-label="Show files">
          <FilesIcon />
        </DesktopButton>
        <Handle $height={24} />
        <Tasks>
          {tasks.map((task) => (
            <Task key={task.label} $active={task.active} $minimized={task.minimized}>
              {task.icon}
              {task.label}
            </Task>
          ))}
        </Tasks>
        <Pager>
          <Workspace $active aria-label="Workspace 1">
            <VmIcon width={16} height={16} />
          </Workspace>
          <Workspace aria-label="Workspace 2" />
          <Workspace aria-label="Workspace 3" />
          <Workspace aria-label="Workspace 4" />
        </Pager>
      </TaskBar>
      <Pointer>
        <PointerIcon />
      </Pointer>
    </Desktop>
  );
}

export default App;
